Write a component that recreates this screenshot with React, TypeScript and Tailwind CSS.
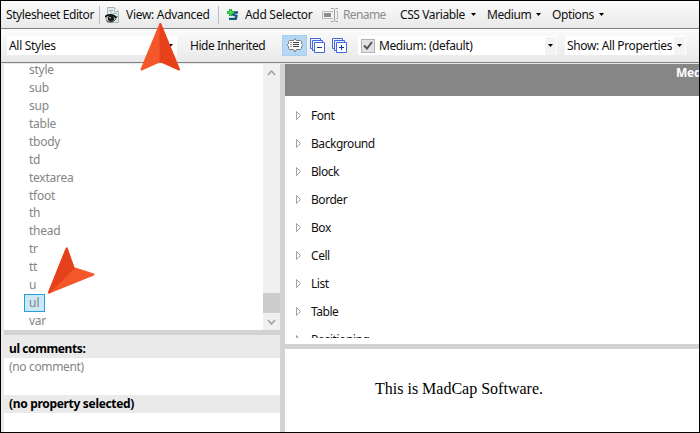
import React from "react";

const STYLES = ["style", "sub", "sup", "table", "tbody", "td", "textarea", "tfoot", "th", "thead", "tr", "tt", "u", "ul", "var"];
const GROUPS = ["Font", "Background", "Block", "Border", "Box", "Cell", "List", "Table", "Positioning"];

function Caret({ className = "" }: { className?: string }) {
  return (
    <svg className={`shrink-0 ${className}`} width="5" height="3" viewBox="0 0 5 3">
      <path d="M0 0h5L2.5 3z" fill="#000" />
    </svg>
  );
}

function PageEyeIcon() {
  return (
    <svg className="shrink-0" width="16" height="18" viewBox="0 0 16 18">
      <path d="M2.500 1.500h7l4 4v11h-11z" fill="#e3eaeb" stroke="#a3b6b8" />
      <path d="M9.500 1.500v4h4" fill="#fff" stroke="#a3b6b8" />
      <path d="M4 4.500h4M6 4.500v3M8 7.500h4M11 10.500h2" stroke="#9fb0b2" fill="none" />
      <path d="M0 11.500C2 8.500 8 8 11.500 12 9 16.500 3 17 0 13z" fill="#bdbdbd" />
      <path d="M0 11C2.500 7.800 8.500 8 11.500 12" stroke="#111" strokeWidth="1.800" fill="none" />
      <path d="M1 14.500c3 2.500 7 2 10-1.500" stroke="#444" fill="none" />
      <circle cx="6" cy="12.500" r="3.100" fill="#1b1b1b" />
      <circle cx="5" cy="11.700" r="0.800" fill="#ddd" />
    </svg>
  );
}

function AddSelectorIcon() {
  return (
    <svg className="shrink-0" width="13" height="14" viewBox="0 0 13 14">
      <path d="M11 4.500H6L5 6.200 9.500 8 8.800 10.800H2" fill="none" stroke="#12587c" strokeWidth="2.300" />
      <path d="M3.500 1v7M0 4.500h7" stroke="#23a83a" strokeWidth="3" />
      <path d="M3.500 1.500v6M.5 4.500h6" stroke="#4edb58" strokeWidth="1.300" />
    </svg>
  );
}

function RenameIcon() {
  return (
    <svg className="shrink-0" width="17" height="14" viewBox="0 0 17 14">
      <path d="M11 3.500H.5v7H11M14 3.500h1.500v7H14" fill="none" stroke="#b9b9b9" />
      <path d="M2 5h7v4H2z" fill="#8c8c8c" />
      <path d="M9 .5h2.500l1 1 1-1H16M9 13.500h2.500l1-1 1 1H16M12.500 1.500v11" fill="none" stroke="#a0a0a0" />
    </svg>
  );
}

function CommentListIcon() {
  return (
    <svg width="16" height="15" viewBox="0 0 16 15">
      <path d="M2.500 2.500h4l1.500-2 1.500 2h4l1 1v2l1 1v1l-1 1v2l-1 1h-4L8 14l-1.500-2.500h-4l-1-1v-2l-1-1v-1l1-1v-2z" fill="#fafafa" stroke="#777" />
      <path d="M3.500 4.500h1M3.500 6.500h1M3.500 8.500h1M6 4.500h6M6 6.500h6M6 8.500h6" stroke="#444" />
    </svg>
  );
}

function StackIcon({ plus = false }: { plus?: boolean }) {
  return (
    <svg className="shrink-0" width="16" height="16" viewBox="0 0 16 16">
      <path d="M2.500 10.500h-2v-10h10v2M4.500 12.500h-2v-10h10v2" fill="none" stroke="#4169e1" />
      <path d="M4.500 4.500h10v10h-10z" fill="#fff" stroke="#4169e1" />
      <path d="M7 9.500h5" stroke="#123a9c" />
      {plus && <path d="M9.500 7v5" stroke="#123a9c" />}
    </svg>
  );
}

export default function App() {
  return (
    <div className="relative flex h-[433px] w-[700px] flex-col overflow-hidden border border-black bg-white font-['Noto_Sans','Open_Sans',sans-serif] text-[12px] leading-[18px] text-[#111] whitespace-nowrap">
      <div className="flex h-[28px] shrink-0 items-center border-b border-[#808080] bg-linear-to-b from-[#fbfbfb] to-[#e9e9e9] pl-[5px]">
        <span className="w-[93px] tracking-[-0.4px]">Stylesheet Editor</span>
        <div className="h-[18px] w-px bg-[#b9bfc9]" />
        <div className="ml-[5px] w-[21px]"><PageEyeIcon /></div>
        <span className="w-[92px] tracking-[-0.3px]">View: Advanced</span>
        <div className="h-[18px] w-px bg-[#b9bfc9]" />
        <div className="ml-[8px] w-[18px]"><AddSelectorIcon /></div>
        <span className="w-[77px] tracking-[-0.3px]">Add Selector</span>
        <div className="w-[21px]"><RenameIcon /></div>
        <span className="w-[57px] tracking-[-0.6px] text-[#8c8c8c]">Rename</span>
        <span className="w-[71px] tracking-[-0.4px]">CSS Variable</span>
        <Caret />
        <span className="ml-[11px] w-[49px] tracking-[-0.4px]">Medium</span>
        <Caret />
        <span className="ml-[11px] w-[47px] tracking-[-0.4px]">Options</span>
        <Caret />
      </div>

      <div className="flex h-[34px] shrink-0 items-center border-b border-[#808080] bg-linear-to-b from-[#fbfbfb] to-[#e9e9e9] pl-[6px]">
        <div className="flex h-[19px] w-[170px] items-center bg-white pl-[2px]">
          <span className="w-[159px] tracking-[-0.3px]">All Styles</span>
          <Caret />
        </div>
        <span className="ml-[13px] w-[92px] tracking-[-0.45px]">Hide Inherited</span>
        <div className="flex h-[21px] w-[25px] items-center justify-center border border-[#a9cdf0] bg-[#b5d7f5]"><CommentListIcon /></div>
        <div className="ml-[3px] flex gap-[6px]"><StackIcon /><StackIcon plus /></div>
        <div className="ml-[10px] flex h-[19px] w-[199px] items-center bg-white pl-[3px]">
          <div className="mr-[4px] flex size-[14px] items-center justify-center border border-[#b4b4b4] bg-[#e2e2e2]">
            <svg width="10" height="9" viewBox="0 0 10 9"><path d="M1 4.500l3 3L9 1" fill="none" stroke="#555" strokeWidth="2" /></svg>
          </div>
          <span className="w-[166px] tracking-[-0.4px]">Medium: (default)</span>
          <div className="flex h-[18px] w-[11px] items-center justify-center bg-[#f3f3f3]"><Caret /></div>
        </div>
        <div className="ml-[8px] flex h-[19px] w-[121px] items-center bg-white pl-[2px]">
          <span className="w-[107px] tracking-[-0.35px]">Show: All Properties</span>
          <div className="flex h-[18px] w-[11px] items-center justify-center bg-[#f3f3f3]"><Caret /></div>
        </div>
      </div>
      <div className="h-px shrink-0 bg-[#ececec]" />

      <div className="flex h-[368px] shrink-0">
        <div className="w-[3px] bg-[#eaeaea]" />
        <div className="flex w-[276px] flex-col">
          <div className="flex h-[266px] overflow-hidden">
            <div className="w-[259px] text-[#858585]">
              <ul className="-mt-[2.6px] pl-[20px]">
                {STYLES.map((name) => (
                  <li key={name} className="flex h-[17.9px] items-center">
                    <span className={name === "ul" ? "flex h-[18px] items-center border border-[#26a0da] bg-[#cbe8f6] px-[4px]" : "px-[5px] tracking-[-0.25px]"}>{name}</span>
                  </li>
                ))}
              </ul>
            </div>
            <div className="flex w-[17px] flex-col items-center bg-[#f0f0f0]">
              <svg className="mt-[5px] shrink-0" width="9" height="7" viewBox="0 0 9 7"><path d="M1 6l3.500-4L8 6" fill="none" stroke="#a4a4a4" strokeWidth="1.700" /></svg>
              <div className="mt-auto h-[20px] w-full bg-[#cdcdcd]" />
              <svg className="mt-[6px] mb-[4px] shrink-0" width="9" height="7" viewBox="0 0 9 7"><path d="M1 1l3.500 4L8 1" fill="none" stroke="#a4a4a4" strokeWidth="1.700" /></svg>
            </div>
          </div>
          <div className="h-[5px] bg-[#d3d3d3]" />
          <div className="flex h-[23px] items-center bg-[#eaeaea] pt-[5px] pl-[5px] font-bold tracking-[-0.4px] text-black">ul comments:</div>
          <div className="h-[37px] pl-[5px] tracking-[-0.35px] text-[#858585]">(no comment)</div>
          <div className="flex h-[18px] items-center bg-[#eaeaea] pl-[5px] font-bold tracking-[-0.32px] text-black">(no property selected)</div>
        </div>
        <div className="w-[5px] bg-[#d3d3d3]" />
        <div className="flex w-[414px] flex-col">
          <div className="h-[32px] shrink-0 overflow-hidden bg-[#868686] pl-[391px] font-bold tracking-[-0.3px] text-white">Medium: (default)</div>
          <div className="h-[242px] shrink-0 overflow-hidden pt-[5px]">
            {GROUPS.map((name) => (
              <div key={name} className="flex h-[28px] items-center pl-[11px]">
                <svg className="mr-[10px] shrink-0" width="5" height="9" viewBox="0 0 5 9"><path d="M.5 .5v8L4.500 4.500z" fill="#fff" stroke="#a3a3a3" /></svg>
                <span className="pt-[2px] tracking-[-0.45px]">{name}</span>
              </div>
            ))}
          </div>
          <div className="mt-[6px] h-[5px] shrink-0 bg-[#d3d3d3]" />
          <div className="pt-[30px] pl-[90px] font-['Liberation_Serif',serif] text-[16px] leading-[20px] text-black">This is MadCap Software.</div>
        </div>
      </div>

      <svg className="absolute top-[21px] left-[137px]" width="44" height="50" viewBox="0 0 44 50">
        <path d="M22.300 2L41 47.500 22.300 39 3.500 47.500z" fill="#f4582a" stroke="#f4582a" strokeLinejoin="round" strokeWidth="2" />
        <path d="M22.300 2L41 47.500 22.300 39z" fill="#e7411b" stroke="#e7411b" strokeLinejoin="round" strokeWidth="1.500" />
      </svg>
      <svg className="absolute top-[244px] left-[44px]" width="52" height="52" viewBox="0 0 52 52">
        <path d="M21.700 3.500L28.500 23 48.500 29.500 4 47.500z" fill="#f4582a" stroke="#f4582a" strokeLinejoin="round" strokeWidth="2" />
        <path d="M21.700 3.500L28.500 23 4 47.500z" fill="#e7411b" stroke="#e7411b" strokeLinejoin="round" strokeWidth="2" />
      </svg>
    </div>
  );
}
